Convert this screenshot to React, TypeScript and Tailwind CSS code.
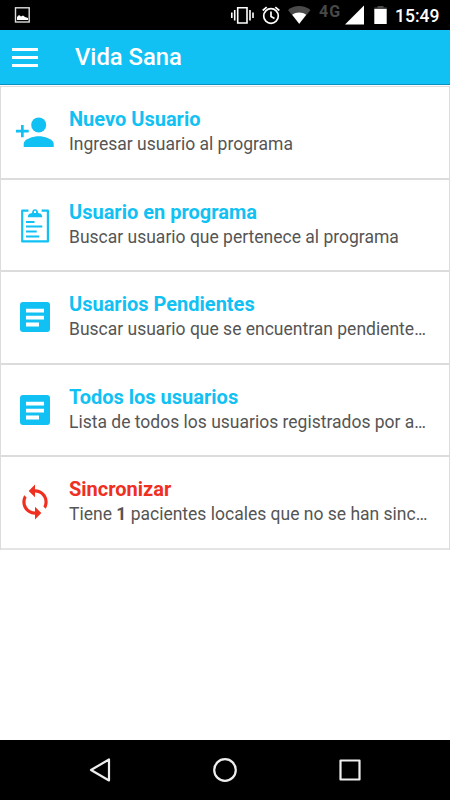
import type { ReactNode } from 'react'

const PersonAdd = () => (
  <svg width="40" height="40" viewBox="0 0 40 40" fill="#11c1f3">
    <path d="M6 13h2.700v4.800h5v2.700h-5v4.800H6v-4.800H1v-2.700h5z" />
    <circle cx="23.700" cy="12.900" r="7.500" />
    <path d="M8.700 35v-3.300c0-5 10-7.500 15-7.500s15 2.500 15 7.500V35z" />
  </svg>
)

const Clipboard = () => (
  <svg width="40" height="40" viewBox="0 0.500 40 40">
    <path d="M13.500 6.200H7.200v30.700h25.700V6.200H26.600" fill="none" stroke="#11c1f3" strokeWidth="2.200" strokeLinejoin="round" />
    <path fillRule="evenodd" fill="#11c1f3" d="M12.700 12.700c.3-2.600 1.600-3.600 3.600-3.900 1-.2.900-.9.900-1.700a2.900 2.900 0 0 1 5.700 0c0 .8.100 1.500 1.100 1.700 2 .3 3 1.300 3.300 3.900zM20 6.200a1.200 1.200 0 1 0 0 2.400 1.200 1.200 0 0 0 0-2.400z" />
    <path d="M11 17.500h8.500M11 22h16.300M11 27h10.700M11 32h13.300" stroke="#11c1f3" strokeWidth="2" />
  </svg>
)

const Article = () => (
  <svg width="40" height="40" viewBox="0 0 40 40">
    <rect x="5" y="5" width="30" height="30" rx="3" fill="#11c1f3" />
    <path d="M11 13.600h18M11 20.600h18M11 27.500h13" stroke="#fff" strokeWidth="3.900" />
  </svg>
)

const Sync = () => (
  <svg width="38" height="38" viewBox="0 0 24 24" fill="#ef2f1f">
    <path d="M12 4V1L8 5l4 4V6c3.310 0 6 2.690 6 6 0 1.010-.25 1.970-.7 2.800l1.460 1.460C19.540 15.030 20 13.570 20 12c0-4.420-3.580-8-8-8zm0 14c-3.310 0-6-2.690-6-6 0-1.010.25-1.970.7-2.800L5.240 7.740C4.460 8.970 4 10.430 4 12c0 4.420 3.580 8 8 8v3l4-4-4-4v3z" />
  </svg>
)

type Item = { title: string; text: ReactNode; icon: ReactNode; alert?: boolean }

const items: Item[] = [
  { title: 'Nuevo Usuario', text: 'Ingresar usuario al programa', icon: <PersonAdd /> },
  { title: 'Usuario en programa', text: 'Buscar usuario que pertenece al programa', icon: <Clipboard /> },
  { title: 'Usuarios Pendientes', text: 'Buscar usuario que se encuentran pendiente…', icon: <Article /> },
  { title: 'Todos los usuarios', text: 'Lista de todos los usuarios registrados por a…', icon: <Article /> },
  {
    title: 'Sincronizar',
    text: <>Tiene <b>1</b> pacientes locales que no se han sinc…</>,
    icon: <Sync />,
    alert: true,
  },
]

export default function App() {
  return (
    <div className="flex h-[800px] w-[450px] flex-col overflow-hidden bg-white font-['Roboto',sans-serif]">
      {/* status bar */}
      <div className="flex h-[30px] shrink-0 items-center justify-between bg-black text-white">
        <svg width="30" height="30" viewBox="0 0 30 30">
          <rect x="15.500" y="7.800" width="13.700" height="14.200" fill="none" stroke="#ddd" strokeWidth="1.400" />
          <path d="M17 20v-3l2-2 2 1.500 2-1 2 1.500 3 1v2z" fill="#fff" />
        </svg>
        <div className="flex items-center">
          <svg width="166" height="30" viewBox="229 0 166 30">
            <path d="M237.700 7.700h9.300v15.300h-9.300zM234.700 10v10.500M250 10v10.500M231.800 12.500v5.500M253 12.500v5.500" fill="none" stroke="#fff" strokeWidth="1.600" />
            <g fill="none" stroke="#fff" strokeWidth="1.700">
              <circle cx="271" cy="16" r="7.300" />
              <path d="M271 11.500v5l3.500 2M262.700 10.500l4-3.400M279.300 10.500l-4-3.400" />
            </g>
            <path d="M288 10c6-5.500 16-5.500 22.500 0l-11.200 14z" fill="#4a4a4a" />
            <path d="M292.200 14.800c4-3 10-3 14 0l-7 9z" fill="#fff" />
            <text x="319" y="16.500" fontSize="16" fontWeight="700" letterSpacing="1" fill="#484848">4G</text>
            <path d="M345 24.500h19V5.500z" fill="#fff" />
            <path d="M377.500 6h6v1.600h3.200v2h-12.400v-2h3.200z" fill="#4a4a4a" />
            <path d="M374.300 9h12.400v15h-12.400z" fill="#fff" />
          </svg>
          <span className="w-[55px] pt-px text-[17.500px] leading-[30px] font-medium">15:49</span>
        </div>
      </div>

      <header className="flex h-[55px] shrink-0 items-center border-b border-[#0c8fc2] bg-[#11c1f3] pl-3 text-white">
        <div className="flex w-[26px] flex-col gap-[5px]">
          <span className="h-[3px] bg-white" />
          <span className="h-[3px] bg-white" />
          <span className="h-[3px] bg-white" />
        </div>
        <h1 className="pl-[37px] text-[23.800px] leading-9 font-medium">Vida Sana</h1>
      </header>

      <main className="flex-1 pt-px">
        <ul className="border-x border-t border-[#dcdcdc]">
          {items.map((item) => (
            <li key={item.title} className="flex h-[92.500px] items-center border-b-2 border-[#dcdcdc] last:border-[#e4e4e4]">
              <div className="flex w-[68px] justify-center">{item.icon}</div>
              <div className="w-[370px]">
                <h2 className={`text-[20px] leading-6 font-bold ${item.alert ? 'text-[#ef2f1f]' : 'text-[#11c1f3]'}`}>{item.title}</h2>
                <p className="text-[17.500px] leading-[26px] whitespace-nowrap text-[#555]">{item.text}</p>
              </div>
            </li>
          ))}
        </ul>
      </main>

      <nav className="h-[60px] shrink-0 bg-black">
        <svg width="450" height="60" viewBox="0 0 450 60" fill="none" stroke="#eee" strokeWidth="2.200" strokeLinejoin="round">
          <path d="M109 19.500v21L91 30z" />
          <circle cx="225" cy="30" r="10.800" />
          <rect x="340.500" y="20.500" width="19" height="19" />
        </svg>
      </nav>
    </div>
  )
}
